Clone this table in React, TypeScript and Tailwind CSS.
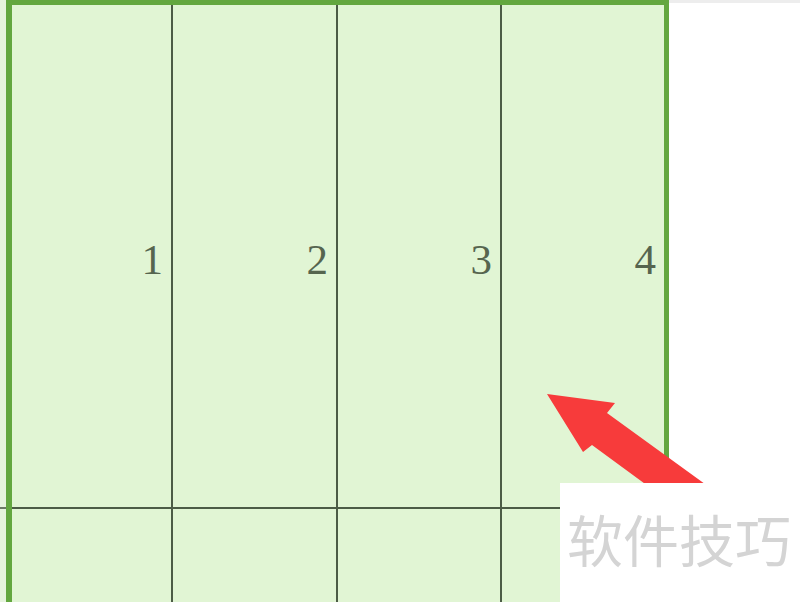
import React from 'react';

const cols = ['1', '2', '3', '4'];

const App: React.FC = () => {
  return (
    <div className="relative w-[800px] h-[602px] overflow-hidden bg-white flex" style={{ fontFamily: '"Liberation Serif", serif' }}>
      {/* thin strip left of the sheet */}
      <div className="w-[6px] flex flex-col bg-[#e6f4dd]">
        <div className="h-[507px]" />
        <div className="h-[2px] bg-[#6c7a66]" />
      </div>

      {/* selected sheet area */}
      <div className="w-[663px] h-[620px] border-l-[6px] border-t-[5px] border-r-[5px] border-[#63a73f] bg-[#e1f5d4] grid grid-cols-[161px_165px_164px_162px] grid-rows-[504px_1fr]">
        {cols.map((n, i) => (
          <div
            key={n}
            className={`flex items-center justify-end pr-2 pt-[6px] border-b-2 border-[#4c5c46] ${i < 3 ? 'border-r-2' : ''}`}
          >
            <span className="text-[43px] leading-none text-[#56654f]">{n}</span>
          </div>
        ))}
        {cols.map((n, i) => (
          <div key={'b' + n} className={`border-[#4c5c46] ${i < 3 ? 'border-r-2' : ''}`} />
        ))}
      </div>

      {/* plain area to the right */}
      <div className="flex-1 border-t-[3px] border-[#ededed]" />

      {/* red arrow */}
      <svg className="absolute left-0 top-0" width="800" height="602" viewBox="0 0 800 602">
        <polygon
          points="547,394 615,403 607,413 727,500 667,500 592,445 583,452"
          fill="#f73b3b"
        />
      </svg>

      {/* watermark */}
      <div className="absolute left-[560px] top-[483px] w-[240px] h-[119px] bg-white pl-[7px] pt-[27px]">
        <span
          className="block text-[56px] leading-none text-[#d4d4d4] tracking-[0px]"
          style={{ fontFamily: '"Noto Sans CJK SC", sans-serif' }}
        >
          软件技巧
        </span>
      </div>
    </div>
  );
};

export default App;
